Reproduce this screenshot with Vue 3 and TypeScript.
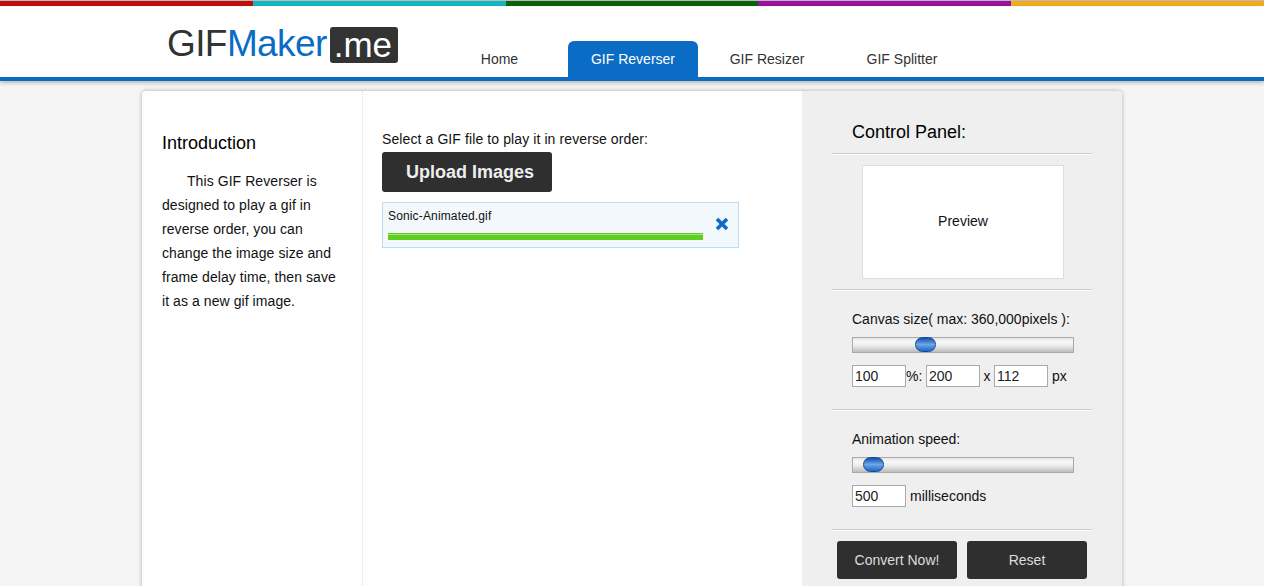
<script setup lang="ts">
const stripes = ['#c00d0d', '#13b5c1', '#0b640b', '#9d0f9d', '#f2ab1b'];
const tabs = [
  { label: 'Home', width: 101, active: false },
  { label: 'GIF Reverser', width: 130, active: true },
  { label: 'GIF Resizer', width: 138, active: false },
  { label: 'GIF Splitter', width: 132, active: false },
];
</script>

<template>
  <div class="stripes">
    <span v-for="c in stripes" :key="c" :style="{ background: c }"></span>
  </div>
  <header class="top">
    <div class="logo">GIF<em>Maker</em><b>.me</b></div>
    <nav class="tabs">
      <a v-for="t in tabs" :key="t.label" :class="{ active: t.active }" :style="{ width: t.width + 'px' }">{{ t.label }}</a>
    </nav>
  </header>

  <main class="card">
    <aside class="intro">
      <h2>Introduction</h2>
      <p>This GIF Reverser is designed to play a gif in reverse order, you can change the image size and frame delay time, then save it as a new gif image.</p>
    </aside>

    <section class="upload">
      <div class="select-label">Select a GIF file to play it in reverse order:</div>
      <button class="upload-btn">Upload Images</button>
      <div class="file">
        <div class="file-body">
          <div class="file-name">Sonic-Animated.gif</div>
          <div class="bar"></div>
        </div>
        <svg class="remove" width="14" height="14" viewBox="0 0 14 14">
          <path d="M2 2 L12 12 M12 2 L2 12" stroke="#0a6cc4" stroke-width="3.6" fill="none" />
        </svg>
      </div>
    </section>

    <section class="panel">
      <div class="panel-title">Control Panel:</div>
      <div class="preview-row">
        <div class="preview">Preview</div>
      </div>
      <div class="group">
        <div class="label">Canvas size( max: 360,000pixels ):</div>
        <div class="slider"><i class="thumb" style="left: 62px"></i></div>
        <div class="inputs">
          <input value="100" /><span class="pct">%:</span><input value="200" /><span class="x">x</span><input value="112" /><span class="px">px</span>
        </div>
      </div>
      <div class="group">
        <div class="label">Animation speed:</div>
        <div class="slider"><i class="thumb" style="left: 10px"></i></div>
        <div class="inputs">
          <input value="500" /><span class="px">milliseconds</span>
        </div>
      </div>
      <div class="actions">
        <button>Convert Now!</button>
        <button>Reset</button>
      </div>
    </section>
  </main>
</template>

<style>
html, body {
  background: #f5f5f5;
  overflow: hidden;
}
</style>

<style scoped>
.stripes {
  display: flex;
  height: 7px;
  border-top: 1px solid #bbb;
  box-sizing: border-box;
  background: #fff;
}
.stripes span {
  flex: 1;
  height: 5px;
}
.top {
  height: 70px;
  padding-left: 167px;
  display: flex;
  background: #fff;
  border-bottom: 4px solid #0a6cc4;
  box-shadow: 0 2px 4px rgba(0, 0, 0, 0.25);
  font-family: "Liberation Sans", Arial, sans-serif;
  position: relative;
}
.logo {
  width: 282px;
  flex: none;
  padding-top: 15px;
  font-size: 37px;
  line-height: 44px;
  letter-spacing: -0.6px;
  color: #333;
  white-space: nowrap;
}
.logo em {
  font-style: normal;
  color: #0a6cc4;
}
.logo b {
  display: inline-block;
  font-weight: normal;
  font-size: 35px;
  background: #333;
  color: #fff;
  border-radius: 3px;
  height: 36px;
  line-height: 36px;
  padding: 0 6px 0 4px;
  margin-left: 3px;
  vertical-align: -1px;
  letter-spacing: 0;
}
.tabs {
  display: flex;
  align-items: flex-end;
}
.tabs a {
  height: 36px;
  line-height: 36px;
  text-align: center;
  font-size: 14px;
  color: #333;
  border-radius: 6px 6px 0 0;
}
.tabs a.active {
  margin-left: 18px;
  background: #0a6cc4;
  color: #fff;
}
.card {
  width: 980px;
  margin: 10px 0 0 142px;
  height: 520px;
  display: flex;
  background: #fff;
  border-radius: 4px;
  box-shadow: 0 0 4px rgba(0, 0, 0, 0.3);
  font-family: "Liberation Sans", Arial, sans-serif;
  color: #111;
  font-size: 14px;
  overflow: hidden;
}
.intro {
  width: 221px;
  box-sizing: border-box;
  padding: 41px 20px 0;
  border-right: 1px dotted #ddd;
}
.intro h2 {
  margin: 0;
  font-size: 18px;
  font-weight: normal;
  line-height: 22px;
  color: #000;
}
.intro p {
  margin: 15px 0 0;
  line-height: 24px;
  text-indent: 25px;
  letter-spacing: 0.07px;
}
.upload {
  width: 439px;
  box-sizing: border-box;
  padding: 39px 0 0 19px;
}
.select-label {
  line-height: 18px;
  letter-spacing: 0.1px;
}
.upload-btn {
  display: block;
  width: 170px;
  height: 40px;
  margin-top: 4px;
  padding: 0 0 0 6px;
  background: #2f2f2f;
  color: #eee;
  border: 0;
  border-radius: 3px;
  font: bold 18px "Liberation Sans", Arial, sans-serif;
}
.file {
  width: 357px;
  height: 46px;
  margin-top: 10px;
  box-sizing: border-box;
  border: 1px solid #bcdcf5;
  background: #f3f8fd;
  display: flex;
  padding: 6px 0 0 5px;
}
.file-body {
  width: 315px;
}
.file-name {
  font-size: 12px;
  line-height: 15px;
  letter-spacing: 0.15px;
}
.bar {
  height: 7px;
  margin-top: 9px;
  background: linear-gradient(#5fce1f 1px, #a5e488 1px, #a5e488 2px, #5fce1f 2px);
}
.remove {
  margin: 8px 0 0 12px;
}
.panel {
  flex: 1;
  background: #efefef;
  padding: 0 30px;
}
.panel-title {
  height: 63px;
  box-sizing: border-box;
  padding: 31px 0 0 20px;
  font-size: 18px;
  line-height: 20px;
  color: #000;
  border-bottom: 1px solid #ccc;
  box-shadow: 0 1px 0 #fff;
}
.preview-row {
  height: 136px;
  box-sizing: border-box;
  padding: 11px 0 0 30px;
  border-bottom: 1px solid #ccc;
  box-shadow: 0 1px 0 #fff;
}
.preview {
  width: 202px;
  height: 114px;
  box-sizing: border-box;
  background: #fff;
  border: 1px solid #d5dfe9;
  text-align: center;
  line-height: 110px;
  font-size: 14px;
}
.group {
  height: 120px;
  box-sizing: border-box;
  padding: 20px 18px 0 20px;
  border-bottom: 1px solid #ccc;
  box-shadow: 0 1px 0 #fff;
}
.label {
  line-height: 18px;
}
.slider {
  position: relative;
  height: 16px;
  margin-top: 9px;
  box-sizing: border-box;
  border: 1px solid #aaa;
  background: linear-gradient(#e6e6e6, #f8f8f8 25%, #ececec 55%, #bcbcbc);
}
.thumb {
  position: absolute;
  top: -1px;
  width: 21px;
  height: 15px;
  box-sizing: border-box;
  border-radius: 8px;
  border: 1px solid #0e4a9c;
  background: linear-gradient(#114fb0, #6ea6e8 50%, #1f66c8);
}
.inputs {
  display: flex;
  align-items: center;
  margin-top: 12px;
}
.inputs input {
  width: 54px;
  height: 22px;
  box-sizing: border-box;
  border: 1px solid #aaa;
  background: #fff;
  padding: 0 2px;
  font: 14px "Liberation Sans", Arial, sans-serif;
  color: #222;
  outline: 0;
}
.pct {
  width: 20px;
  box-sizing: border-box;
}
.x {
  width: 14px;
  text-align: center;
}
.px {
  margin-left: 4px;
}
.actions {
  display: flex;
  justify-content: center;
  gap: 10px;
  margin-top: 11px;
}
.actions button {
  width: 120px;
  height: 38px;
  background: #2f2f2f;
  color: #ddd;
  border: 0;
  border-radius: 3px;
  font: 14px "Liberation Sans", Arial, sans-serif;
}
</style>
